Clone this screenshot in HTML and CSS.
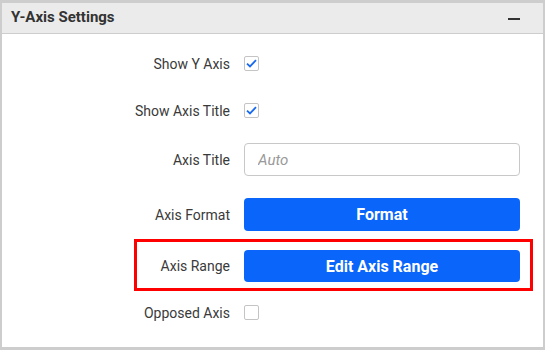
FILE: index.html
```html
<!DOCTYPE html>
<html>
<head>
  <meta charset="utf-8"/>
  <title>Y-Axis Settings</title>
  <link rel="stylesheet" href="styles.css">
</head>
<body>
  <div class="panel">
    <div class="panel-header">
      <span class="panel-title">Y-Axis Settings</span>
      <span class="collapse"></span>
    </div>
    <div class="panel-body">
      <div class="row row-check first">
        <label class="label">Show Y Axis</label>
        <span class="checkbox checked">
          <svg width="11" height="9" viewBox="0 0 11 9"><path d="M1 4.6 L4 7.4 L10 1.2" fill="none" stroke="#1a6af0" stroke-width="1.8"/></svg>
        </span>
      </div>
      <div class="row row-check second">
        <label class="label">Show Axis Title</label>
        <span class="checkbox checked">
          <svg width="11" height="9" viewBox="0 0 11 9"><path d="M1 4.6 L4 7.4 L10 1.2" fill="none" stroke="#1a6af0" stroke-width="1.8"/></svg>
        </span>
      </div>
      <div class="row row-input">
        <label class="label">Axis Title</label>
        <input class="text-input" type="text" placeholder="Auto">
      </div>
      <div class="row row-button">
        <label class="label">Axis Format</label>
        <button class="btn">Format</button>
      </div>
      <div class="row row-button highlight">
        <label class="label">Axis Range</label>
        <button class="btn">Edit Axis Range</button>
      </div>
      <div class="row row-check last">
        <label class="label">Opposed Axis</label>
        <span class="checkbox"></span>
      </div>
    </div>
  </div>
</body>
</html>
```

FILE: styles.css
```css
body {
  margin: 0;
  font-family: Roboto, "Liberation Sans", Arial, sans-serif;
  background-color: #fff;
}
.panel {
  width: 545px;
  height: 350px;
  box-sizing: border-box;
  border-top: 3px solid #cdcdcd;
  border-left: 2px solid #cdcdcd;
  border-right: 2px solid #cdcdcd;
  border-bottom: 3px solid #cdcdcd;
  background-color: #fff;
}
.panel-header {
  height: 30px;
  background-color: #ebebeb;
  border-bottom: 1px solid #cdcdcd;
  display: flex;
  align-items: center;
  justify-content: space-between;
  padding: 0 23px 0 9px;
}
.panel-title {
  font-size: 15px;
  font-weight: bold;
  color: #333;
  margin-top: -2px;
}
.collapse {
  width: 12px;
  height: 2px;
  background-color: #333;
  margin-top: 1px;
}
.panel-body {
  padding-top: 22px;
}
.row {
  display: flex;
  align-items: center;
}
.label {
  width: 242px;
  padding-right: 14px;
  box-sizing: border-box;
  text-align: right;
  font-size: 14px;
  color: #3a3a3a;
}
.checkbox {
  width: 15px;
  height: 15px;
  box-sizing: border-box;
  border: 1px solid #c4c4c4;
  border-radius: 2px;
  display: flex;
  align-items: center;
  justify-content: center;
}
.row-check {
  height: 15px;
}
.second {
  margin-top: 32px;
}
.row-input {
  margin-top: 25px;
}
.text-input {
  width: 276px;
  height: 33px;
  box-sizing: border-box;
  border: 1px solid #c8c8c8;
  border-radius: 4px;
  padding: 0 13px;
  font-family: Roboto, "Liberation Sans", Arial, sans-serif;
  font-size: 15px;
  outline: none;
}
.text-input::placeholder {
  color: #999;
  font-style: italic;
}
.row-button {
  margin-top: 22px;
}
.btn {
  width: 276px;
  height: 33px;
  border: none;
  border-radius: 4px;
  background-color: #0a66fb;
  color: #fff;
  font-family: Roboto, "Liberation Sans", Arial, sans-serif;
  font-size: 16px;
  font-weight: bold;
  cursor: pointer;
}
.highlight {
  margin-top: 8px;
  margin-left: 132px;
  width: 399px;
  box-sizing: border-box;
  border: 3px solid #f00;
  padding: 8px 0 6px 0;
}
.highlight .label {
  width: 107px;
}
.highlight .btn {
  height: 32px;
}
.last {
  margin-top: 14px;
}
```
